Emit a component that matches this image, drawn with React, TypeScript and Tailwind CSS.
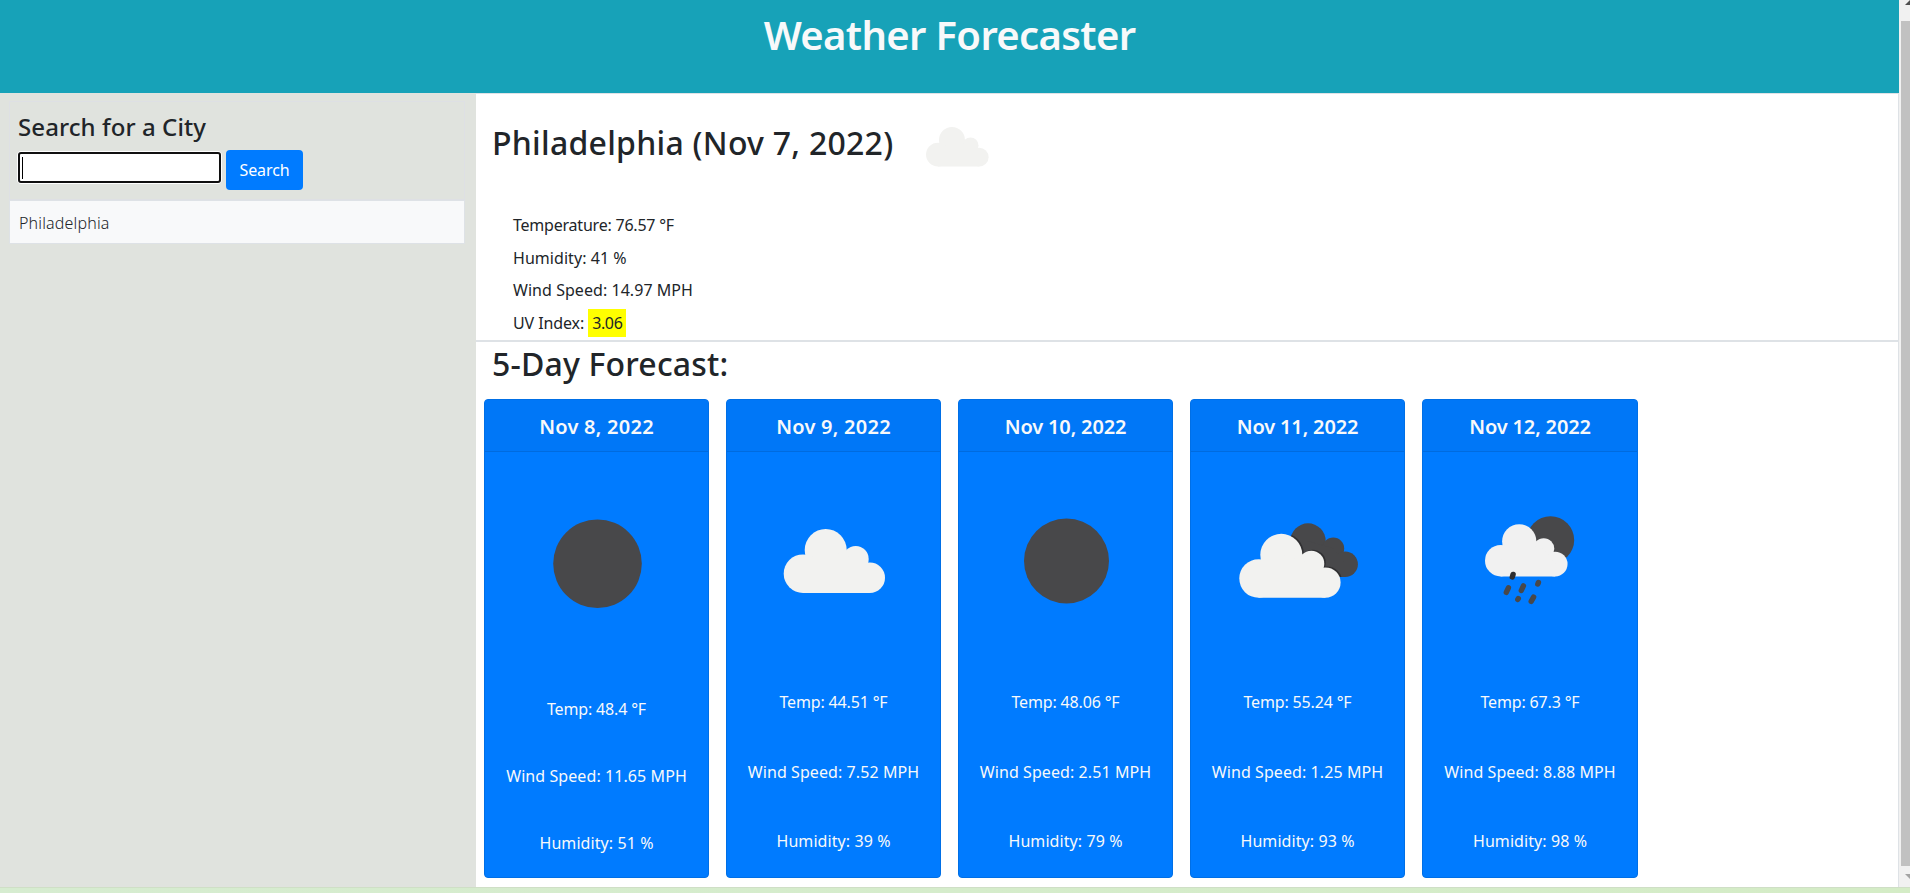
const DARK = "#48484a";
const LIGHT = "#f2f2f0";

function CloudParts() {
  return (
    <>
      <circle cx="42" cy="21" r="21" />
      <circle cx="19.3" cy="44.7" r="19.3" />
      <circle cx="72" cy="30" r="13" />
      <circle cx="86.1" cy="48.8" r="15.2" />
      <path d="M19.3 64V44L42 21L72 30L86.1 48V64Z" />
    </>
  );
}

function CloudShape({ x, y, scale, fill }: { x: number; y: number; scale: number; fill: string }) {
  return (
    <g transform={`translate(${x} ${y}) scale(${scale})`} fill={fill}>
      <CloudParts />
    </g>
  );
}

function Moon({ cx, cy, r }: { cx: number; cy: number; r: number }) {
  return <circle cx={cx} cy={cy} r={r} fill={DARK} />;
}

function BrokenClouds() {
  return (
    <>
      <defs>
        <clipPath id="rear-cloud">
          <circle cx="117.1" cy="88.9" r="17.6" />
          <circle cx="142.3" cy="96.5" r="10.9" />
          <circle cx="154.1" cy="112.3" r="12.8" />
          <path d="M98 125V108.3L117.1 88.9L142.3 96.5L154.1 111.6V125Z" />
        </clipPath>
      </defs>
      <CloudShape x={81.8} y={71.3} scale={0.84} fill={DARK} />
      <g clipPath="url(#rear-cloud)">
        <CloudShape x={49.8} y={80.8} scale={1} fill="#303032" />
      </g>
      <CloudShape x={48.3} y={81.8} scale={1} fill={LIGHT} />
    </>
  );
}

function NightRain() {
  return (
    <>
      <Moon cx={127.5} cy={88} r={23.7} />
      <CloudShape x={62} y={72.3} scale={0.815} fill="#f1f1f1" />
      <g stroke={DARK} strokeWidth="5.4" strokeLinecap="round">
        <path d="M90.1 122.4L89.3 125" stroke="#2e2e30" />
        <path d="M85.4 135.8L83.3 140.4" />
        <path d="M100.4 133.9L98.3 138.5" />
        <path d="M95.3 146.6L94.8 147.4" />
        <path d="M110.6 145.2L108.2 149.4" />
        <path d="M115.4 130.6L114.8 132" />
      </g>
    </>
  );
}

const days = [
  { date: "Nov 8, 2022", temp: "48.4", wind: "11.65", humidity: 51, icon: <Moon cx={112.5} cy={111.7} r={44.3} /> },
  { date: "Nov 9, 2022", temp: "44.51", wind: "7.52", humidity: 39, icon: <CloudShape x={56.7} y={77} scale={1} fill={LIGHT} /> },
  { date: "Nov 10, 2022", temp: "48.06", wind: "2.51", humidity: 79, icon: <Moon cx={107.5} cy={109} r={42.5} /> },
  { date: "Nov 11, 2022", temp: "55.24", wind: "1.25", humidity: 93, icon: <BrokenClouds /> },
  { date: "Nov 12, 2022", temp: "67.3", wind: "8.88", humidity: 98, icon: <NightRain /> },
];

function DayCard({ day, index }: { day: (typeof days)[number]; index: number }) {
  const first = index === 0;
  const width = first ? "w-[225px]" : index === 4 ? "w-[216px]" : "w-[215px]";
  return (
    <article
      className={`flex h-[479px] flex-col overflow-hidden rounded border border-[#006fe6] bg-[#007bff] text-center text-[#f8f9fa] ${width}`}
    >
      <h5
        className={`h-[52px] border-b border-[#006bdf] bg-[#0077f7] pt-[15px] text-xl leading-6 font-semibold ${
          index < 2 ? "tracking-[0.25px]" : "tracking-[-0.15px]"
        }`}
      >
        {day.date}
      </h5>
      <svg className={first ? "h-[245px] w-[223px]" : "h-[238px] w-[213px]"} aria-hidden="true">
        {day.icon}
      </svg>
      <div className={`flex flex-col leading-6 ${first ? "gap-[43px]" : "gap-[45.5px]"}`}>
        <p className="tracking-[-0.16px]">Temp: {day.temp} °F</p>
        <p className="tracking-[0.08px]">Wind Speed: {day.wind} MPH</p>
        <p className="tracking-[0.08px]">Humidity: {day.humidity} %</p>
      </div>
    </article>
  );
}

function Scrollbar() {
  return (
    <div className="flex w-[11px] flex-col overflow-hidden bg-[#f1f1f1] pl-0.5">
      <svg className="h-[21px] w-[9px]" aria-hidden="true">
        <path d="M9 0V5H4Z" fill="#505050" />
      </svg>
      <div className="h-[845px] bg-[#c1c1c1]" />
      <svg className="h-[21px] w-[9px]" aria-hidden="true">
        <path d="M4 8H9V13Z" fill="#a3a3a3" />
      </svg>
    </div>
  );
}

export default function App() {
  return (
    <div className="flex h-[893px] w-[1910px] flex-col overflow-hidden bg-white font-['Noto_Sans',sans-serif] text-base text-[#212529]">
      <div className="flex h-[887px]">
        <div className="flex w-[1899px] flex-col">
          <header className="h-[93px] bg-[#17a2b8] pt-[11px] text-center">
            <h1 className="text-[40px] leading-[48px] font-semibold tracking-[-0.65px] text-[#f8f9fa]">Weather Forecaster</h1>
          </header>
          <div className="flex flex-1">
            <aside className="w-[476px] bg-[#e0e3de] pt-2 pr-[11px] pl-[9px]">
              <section className="h-[99px] border border-[#dee0e4] pt-[10px] pl-2">
                <h4 className="text-2xl leading-[29px] font-medium tracking-[0.08px]">Search for a City</h4>
                <div className="mt-[9px] flex items-start">
                  <div className="mt-[1px] -ml-px flex h-[33px] w-[205px] rounded-[4px] border border-white bg-white">
                    <div className="flex w-full items-center rounded-[3px] border-2 border-[#101010] pl-0.5">
                      <span className="h-[22px] w-px bg-black" />
                    </div>
                  </div>
                  <button className="ml-1 h-10 w-[77px] rounded bg-[#007bff] leading-6 tracking-[-0.11px] text-white">
                    Search
                  </button>
                </div>
              </section>
              <ul>
                <li className="h-[44px] border border-[#dee2e6] bg-[#f8f9fa] pt-[10px] pl-[9px] leading-6 font-light tracking-[0.17px]">
                  Philadelphia
                </li>
              </ul>
            </aside>
            <main className="flex flex-1 flex-col">
              <section className="h-[248px] border-t border-r border-b border-[#dee2e6] pl-4">
                <div className="flex h-[115px]">
                  <h2 className="mt-[30px] w-[434px] text-[32px] leading-[38px] font-medium tracking-[0.26px] whitespace-nowrap">
                    Philadelphia (Nov 7, 2022)
                  </h2>
                  <svg className="mt-[33px] h-10 w-[63px]" aria-hidden="true">
                    <CloudShape x={0} y={0} scale={0.618} fill={LIGHT} />
                  </svg>
                </div>
                <div className="pl-[21px] leading-[32.67px]">
                  <p className="tracking-[-0.22px]">Temperature: 76.57 °F</p>
                  <p className="tracking-[0.05px]">Humidity: 41 %</p>
                  <p className="tracking-[0.05px]">Wind Speed: 14.97 MPH</p>
                  <p className="tracking-[-0.1px]">
                    UV Index: <span className="bg-[#ffff00] px-1 py-[3px] tracking-[-0.4px]">3.06</span>
                  </p>
                </div>
              </section>
              <section className="flex-1 border-t border-r border-[#dee2e6] pt-[3px] pl-2">
                <h2 className="pl-2 text-[32px] leading-[38px] font-medium tracking-[0.17px]">5-Day Forecast:</h2>
                <div className="mt-4 flex gap-[17px]">
                  {days.map((day, index) => (
                    <DayCard key={day.date} day={day} index={index} />
                  ))}
                </div>
              </section>
            </main>
          </div>
        </div>
        <Scrollbar />
      </div>
      <footer className="h-1.5 border-t border-[#cfdfc6] bg-linear-to-r from-[#d6ecd0] to-[#d4ecc6]" />
    </div>
  );
}
